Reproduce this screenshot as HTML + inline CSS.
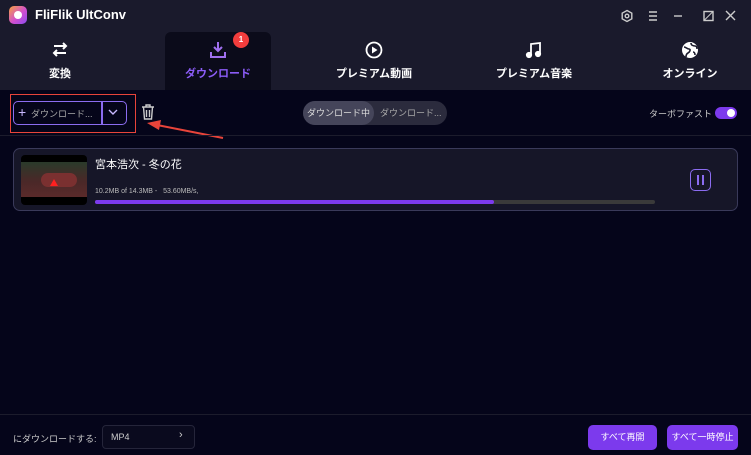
<!DOCTYPE html>
<html><head><meta charset="utf-8"><style>
*{margin:0;padding:0;box-sizing:border-box}
body{width:751px;height:455px;background:#05051a;font-family:"Liberation Sans","Noto Sans CJK JP",sans-serif;color:#fff;position:relative;overflow:hidden}
.hdr{position:absolute;left:0;top:0;width:751px;height:90px;background:#1a1a2c}
.abs{position:absolute}
.tab{position:absolute;top:32px;height:58px;text-align:center;font-size:11px;font-weight:bold}
.tab svg{display:block;margin:9px auto 6px}
</style></head><body>
<div class="hdr"></div>
<div class="abs" style="left:9px;top:6px;width:18px;height:18px;border-radius:5px;background:linear-gradient(135deg,#f7a23c,#d24fd0 55%,#8c4cf0)"></div>
<div class="abs" style="left:14px;top:11px;width:8px;height:8px;border-radius:50%;background:#fff"></div>
<div class="abs" style="left:35px;top:7px;font-size:13px;font-weight:bold">FliFlik UltConv</div>
<svg class="abs" style="left:619px;top:9px" width="122" height="14" viewBox="0 0 122 14" fill="none" stroke="#ccc" stroke-width="1.4">
<path d="M8 1.5l4.8 2.7v5.6L8 12.5 3.2 9.8V4.2z"/><circle cx="8" cy="7" r="1.8"/>
<path d="M30 3h8M30 7h8M30 11h8"/><path d="M55 7h8"/>
<rect x="85" y="2.5" width="9" height="9"/><path d="M85 11.5l9-9" stroke-width="1"/><path d="M107 2l9 9M116 2l-9 9"/>
</svg>
<div class="abs" style="left:165px;top:32px;width:106px;height:58px;background:#0b0b1a;border-radius:6px 6px 0 0"></div>
<div class="abs" style="left:233px;top:32px;width:16px;height:16px;border-radius:50%;background:#f23d3d;font-size:8px;font-weight:bold;text-align:center;line-height:16px">1</div>
<div class="tab" style="left:10px;width:100px">
<svg width="18" height="18" viewBox="0 0 18 18" fill="none" stroke="#fff" stroke-width="2"><path d="M3 5h12M12 2l3 3-3 3M15 12H3M6 9l-3 3 3 3"/></svg>変換</div>
<div class="tab" style="left:168px;width:100px;color:#8b5cf6">
<svg width="18" height="18" viewBox="0 0 18 18" fill="none" stroke="#a070f0" stroke-width="2"><path d="M9 1v9M5 6l4 4 4-4M2 11v5h14v-5"/></svg>ダウンロード</div>
<div class="tab" style="left:324px;width:100px">
<svg width="18" height="18" viewBox="0 0 18 18"><circle cx="9" cy="9" r="7.5" fill="none" stroke="#fff" stroke-width="1.8"/><path d="M7 5.5v7l5.5-3.5z" fill="#fff"/></svg>プレミアム動画</div>
<div class="tab" style="left:484px;width:100px">
<svg width="18" height="18" viewBox="0 0 18 18" fill="none" stroke="#fff" stroke-width="1.8"><path d="M6 14V3l9-1v11"/><circle cx="4" cy="14" r="2.2" fill="#fff"/><circle cx="13" cy="13" r="2.2" fill="#fff"/></svg>プレミアム音楽</div>
<div class="tab" style="left:640px;width:100px">
<svg width="18" height="18" viewBox="0 0 18 18"><circle cx="9" cy="9" r="8" fill="#fff"/><path d="M3 6c2 0 3 2 5 2s1 3-1 4-2 3-2 4M10 2c0 2 2 3 4 3s2 2 2 3M12 11c1 0 2 1 2 3" stroke="#1a1a2c" stroke-width="1.6" fill="none"/></svg>オンライン</div>
<!-- toolbar -->
<div class="abs" style="left:10px;top:94px;width:126px;height:39px;border:1.5px solid #e8443a"></div>
<div class="abs" style="left:13px;top:101px;width:114px;height:24px;border:1.5px solid #8b6cf0;border-radius:5px"></div>
<div class="abs" style="left:101px;top:101px;width:1.5px;height:24px;background:#8b6cf0"></div>
<div class="abs" style="left:18px;top:104px;font-size:14px;color:#c8b8ff">+</div>
<div class="abs" style="left:31px;top:107px;font-size:9px;color:#aaa">ダウンロード...</div>
<svg class="abs" style="left:108px;top:109px" width="10" height="7" viewBox="0 0 10 7" fill="none" stroke="#c8b8ff" stroke-width="1.4"><path d="M1 1l4 4 4-4"/></svg>
<svg class="abs" style="left:141px;top:104px" width="14" height="16" viewBox="0 0 14 16" fill="none" stroke="#ccc" stroke-width="1.4"><path d="M1 3h12M5 3V1h4v2M2.5 3l1 12h7l1-12M5.5 6v7M8.5 6v7"/></svg>
<svg class="abs" style="left:145px;top:118px" width="80" height="22" viewBox="0 0 80 22"><path d="M78 20L12 7" stroke="#e8443a" stroke-width="2"/><path d="M2 5l14-3-2 10z" fill="#e8443a"/></svg>
<div class="abs" style="left:303px;top:101px;width:144px;height:24px;border-radius:12px;background:#2b2b3d"></div>
<div class="abs" style="left:303px;top:101px;width:71px;height:24px;border-radius:12px;background:#45455a;font-size:9px;color:#ddd;text-align:center;line-height:24px">ダウンロード中</div>
<div class="abs" style="left:380px;top:101px;font-size:9px;color:#aaa;line-height:24px">ダウンロード...</div>
<div class="abs" style="left:649px;top:107px;font-size:9px;color:#ccc">ターボファスト</div>
<div class="abs" style="left:715px;top:107px;width:22px;height:12px;border-radius:6px;background:#7c3aed"></div>
<div class="abs" style="left:727px;top:109px;width:8px;height:8px;border-radius:50%;background:#fff"></div>
<div class="abs" style="left:0;top:135px;width:751px;height:1px;background:#1c1c2c"></div>
<!-- item -->
<div class="abs" style="left:13px;top:148px;width:725px;height:63px;border:1.5px solid #3a3a5a;border-radius:7px;background:#161628"></div>
<div class="abs" style="left:21px;top:155px;width:66px;height:50px;border-radius:4px;background:#000;overflow:hidden">
<div style="position:absolute;left:0;top:7px;width:66px;height:35px;background:linear-gradient(180deg,#2a3a2a,#4a2828 55%,#5a2a2a)"></div>
<div style="position:absolute;left:20px;top:18px;width:36px;height:14px;border-radius:7px;background:#7a3030"></div>
<div style="position:absolute;left:29px;top:20px;width:0;height:0;border:4px solid transparent;border-bottom:7px solid #ff2020"></div></div>
<div class="abs" style="left:95px;top:156px;font-size:11px">宮本浩次 - 冬の花</div>
<div class="abs" style="left:95px;top:188px;font-size:7px;color:#bbb">10.2MB of 14.3MB -&nbsp;&nbsp; 53.60MB/s,</div>
<div class="abs" style="left:95px;top:200px;width:560px;height:4px;border-radius:2px;background:#3a3a3a"></div>
<div class="abs" style="left:95px;top:200px;width:399px;height:4px;border-radius:2px;background:#7c3aed"></div>
<div class="abs" style="left:690px;top:169px;width:21px;height:22px;border:1.5px solid #8b6cf0;border-radius:5px"></div>
<div class="abs" style="left:697px;top:175px;width:2px;height:10px;background:#8b6cf0"></div>
<div class="abs" style="left:702px;top:175px;width:2px;height:10px;background:#8b6cf0"></div>
<!-- footer -->
<div class="abs" style="left:0;top:414px;width:751px;height:1px;background:#1c1c2c"></div>
<div class="abs" style="left:13px;top:432px;font-size:9px;color:#ccc">にダウンロードする:</div>
<div class="abs" style="left:102px;top:425px;width:93px;height:24px;border:1px solid #25253a;border-radius:4px;background:#0a0a1e"></div>
<div class="abs" style="left:111px;top:432px;font-size:9px;color:#ccc">MP4</div>
<div class="abs" style="left:179px;top:429px;font-size:11px;color:#ccc">›</div>
<div class="abs" style="left:588px;top:425px;width:69px;height:25px;border-radius:5px;background:#7c3aed;font-size:9px;text-align:center;line-height:25px">すべて再開</div>
<div class="abs" style="left:667px;top:425px;width:71px;height:25px;border-radius:5px;background:#7c3aed;font-size:9px;text-align:center;line-height:25px">すべて一時停止</div>
</body></html>
